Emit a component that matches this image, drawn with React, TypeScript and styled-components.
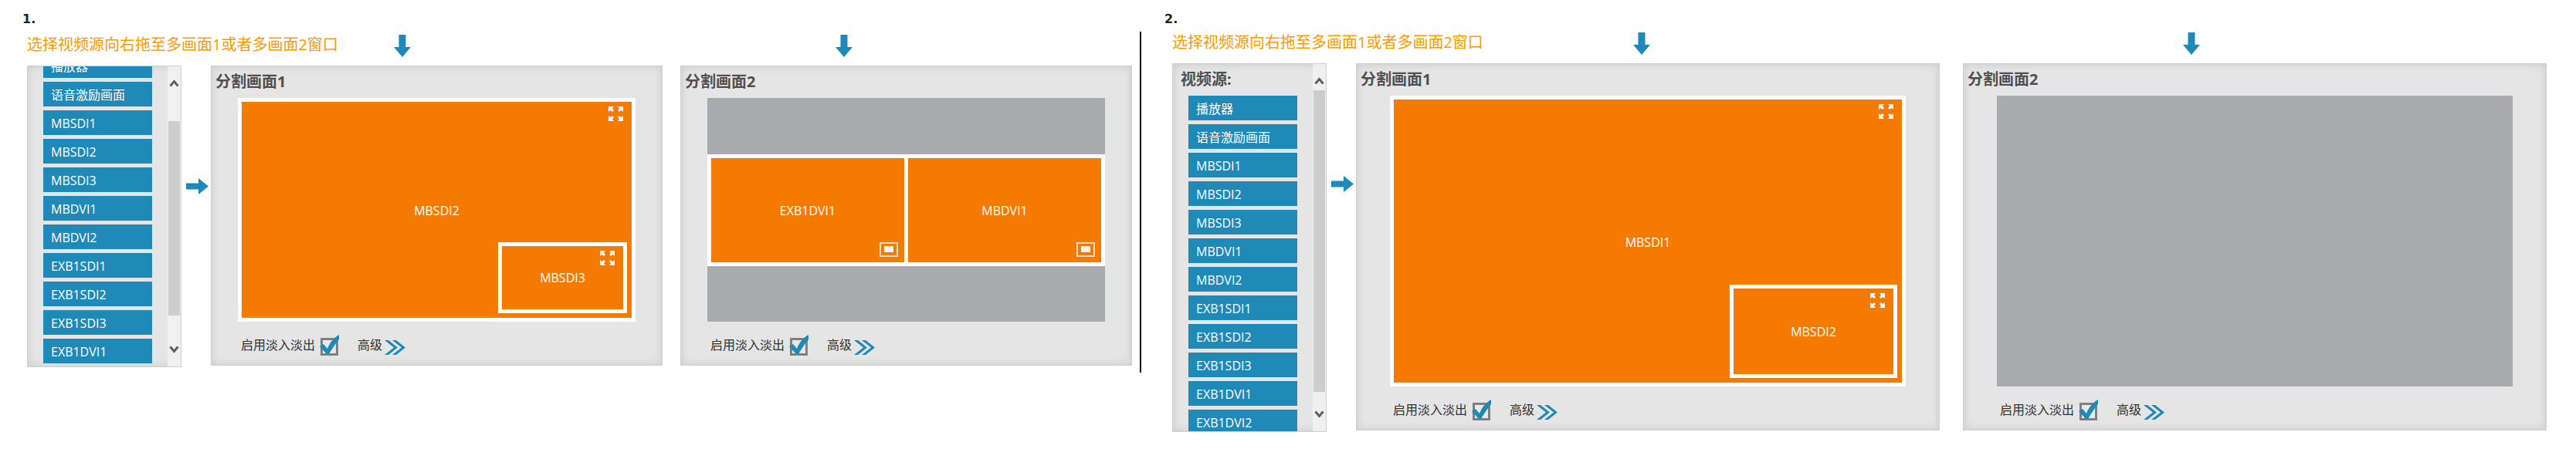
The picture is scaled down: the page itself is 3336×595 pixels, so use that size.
import React, { useLayoutEffect, useRef } from "react";
import styled, { createGlobalStyle } from "styled-components";

const GlobalStyle = createGlobalStyle`
  * { box-sizing: border-box; }
  body {
    margin: 0;
    background: #fff;
    color: #333;
    font-family: "Open Sans", "Noto Sans CJK SC", sans-serif;
    font-size: 16px;
    line-height: 24px;
  }
  button { font: inherit; color: inherit; border: 0; padding: 0; background: none; cursor: pointer; }
  h2, h3, p, ul { margin: 0; padding: 0; }
  ul { list-style: none; }
  svg { display: block; }
`;

const BLUE = "#1f89b7";
const ORANGE = "#f57b00";

const Page = styled.main`
  display: flex;
  align-items: flex-start;
  padding: 12px 38px 24px 29px;
`;

const Divider = styled.hr`
  flex: none;
  width: 2px;
  height: 442px;
  margin: 29px 30px 0 10px;
  border: 0;
  background: #111;
`;

const Step = styled.section<{ $share: number; $indent: number }>`
  flex: ${(p) => p.$share} 1 0;
  min-width: 0;
  padding-left: ${(p) => p.$indent}px;
`;

const StepNumber = styled.h2<{ $indent: number }>`
  margin-left: -${(p) => p.$indent}px;
  height: 28px;
  font-family: "DejaVu Sans", sans-serif;
  font-size: 16px;
  line-height: 26px;
  font-weight: 700;
  color: #222;
`;

const Heading = styled.div<{ $height: number }>`
  display: flex;
  align-items: flex-end;
  height: ${(p) => p.$height}px;
  padding-bottom: 11px;
`;

const Hint = styled.p`
  flex: 0 0 238px;
  min-width: 0;
  font-size: 20px;
  line-height: 32px;
  color: #ff9900;
  white-space: nowrap;
`;

const Columns = styled.div<{ $gap: number }>`
  flex: 1;
  min-width: 0;
  display: flex;
  align-items: flex-start;
  gap: ${(p) => p.$gap}px;
`;

const ArrowSlot = styled.div<{ $indent: number }>`
  flex: 1 1 0;
  min-width: 0;
  svg { margin-left: ${(p) => p.$indent}px; }
`;

const Body = styled.div`
  display: flex;
  align-items: flex-start;
`;

const Box = styled.section`
  border: 1px solid #d0d0d0;
  background: #e5e5e5;
  box-shadow: inset 0 0 12px rgba(0, 0, 0, 0.12);
`;

const SourceBox = styled(Box)<{ $height: number }>`
  flex: 0 0 200px;
  display: flex;
  height: ${(p) => p.$height}px;
`;

const Scroller = styled.div`
  flex: 1;
  overflow: hidden;
  padding: 5px 20px;
`;

const BoxTitle = styled.h3`
  font-size: 20px;
  line-height: 30px;
  font-weight: 700;
  color: #505050;
`;

const SourceTitle = styled(BoxTitle)`
  margin: 0 0 6px -10px;
`;

const Sources = styled.ul`
  display: grid;
  gap: 5px;
`;

const Source = styled.button`
  display: block;
  width: 100%;
  height: 32px;
  padding: 2px 0 0 10px;
  background: ${BLUE};
  color: #fff;
  line-height: 30px;
  text-align: left;
`;

const ScrollBar = styled.div`
  flex: 0 0 17px;
  display: flex;
  flex-direction: column;
  background: #f0f0f0;
`;

const ScrollButton = styled.button<{ $up?: boolean }>`
  display: flex;
  align-items: center;
  justify-content: center;
  height: 34px;
  padding: ${(p) => (p.$up ? "10px 0 0" : "0 0 10px")};
`;

const Track = styled.div`
  flex: 1;
`;

const Thumb = styled.div<{ $top: number; $height: number }>`
  height: ${(p) => p.$height}px;
  margin: ${(p) => p.$top}px 1px 0;
  background: #cdcdcd;
`;

const FlowArrow = styled.div<{ $top: number }>`
  flex: 0 0 38px;
  padding: ${(p) => p.$top}px 0 0 6px;
`;

const ScreenBox = styled(Box)<{ $side: number }>`
  flex: 1 1 0;
  min-width: 0;
  padding: 5px ${(p) => p.$side}px 9px;
`;

const ScreenTitle = styled(BoxTitle)<{ $side: number }>`
  margin: 0 0 6px ${(p) => 5 - p.$side}px;
`;

const Stage = styled.div<{ $ratio: string }>`
  display: flex;
  flex-direction: column;
  justify-content: center;
  aspect-ratio: ${(p) => p.$ratio};
  background: #a9aaad;
`;

const Tile = styled.div`
  position: relative;
  flex: 1;
  display: flex;
  align-items: center;
  justify-content: center;
  padding-top: 2px;
  background: ${ORANGE};
  color: #fff;
`;

const FullTile = styled(Tile)`
  border: 5px solid #fff;
`;

const TileRow = styled.div`
  display: flex;
  gap: 5px;
  height: 50%;
  padding: 5px;
  background: #fff;
`;

const Inset = styled.div<{ $width: number; $height: number }>`
  position: absolute;
  right: 6px;
  bottom: 6px;
  width: ${(p) => p.$width}px;
  height: ${(p) => p.$height}px;
  display: flex;
  align-items: center;
  justify-content: center;
  border: 5px solid #fff;
  background: ${ORANGE};
`;

const ExpandButton = styled.button`
  position: absolute;
  top: 6px;
  right: 11px;
`;

const LayoutButton = styled.button`
  position: absolute;
  right: 8px;
  bottom: 7px;
`;

const Footer = styled.div`
  display: flex;
  align-items: flex-start;
  height: 26px;
  margin-top: 21px;
  padding-left: 4px;
  line-height: 18px;
`;

const FadeLabel = styled.label`
  display: flex;
  align-items: flex-start;
  gap: 7px;
`;

const CheckWrap = styled.span`
  position: relative;
  width: 23px;
  height: 23px;
`;

const Check = styled.input`
  appearance: none;
  display: block;
  width: 23px;
  height: 23px;
  margin: 0;
  border: 3px solid #808080;
  background: #e9e9e9;
  &:not(:checked) + svg { display: none; }
`;

const Tick = styled.svg`
  position: absolute;
  left: -1px;
  top: -4px;
  pointer-events: none;
`;

const Advanced = styled.button`
  display: flex;
  align-items: flex-start;
  gap: 3px;
  margin-left: 25px;
  svg { margin-top: 3px; }
`;

const DownArrow = () => (
  <svg width="22" height="29" viewBox="0 0 22 29" fill={BLUE} aria-hidden="true">
    <path d="M6.500 0h9v16H22L11 29 0 16h6.500z" />
  </svg>
);

const RightArrow = () => (
  <svg width="29" height="21" viewBox="0 0 29 21" fill={BLUE} aria-hidden="true">
    <path d="M0 6.500h16V0L29 10.500 16 21v-6.500H0z" />
  </svg>
);

const ScrollChevron = ({ up }: { up?: boolean }) => (
  <svg width="13" height="10" viewBox="0 0 13 10" fill="none" stroke="#606060" strokeWidth="3" aria-hidden="true">
    <path d={up ? "M1.500 8.500 6.500 2.500 11.500 8.500" : "M1.500 1.500 6.500 7.500 11.500 1.500"} />
  </svg>
);

const ExpandIcon = () => (
  <svg width="19" height="19" viewBox="0 0 19 19" fill="#f3f3f3" aria-hidden="true">
    <path d="M0 0h7L5 2.500 7 5 5 7 2.500 5 0 7z" />
    <path d="M19 0h-7l2 2.500L12 5l2 2 2.500-2L19 7z" />
    <path d="M0 19h7l-2-2.500L7 14l-2-2-2.500 2L0 12z" />
    <path d="M19 19h-7l2-2.500-2-2.500 2-2 2.500 2 2.500-2z" />
  </svg>
);

const LayoutIcon = () => (
  <svg width="24" height="19" viewBox="0 0 24 19" aria-hidden="true">
    <rect x="1" y="1" width="22" height="17" fill="none" stroke="#fbdcc0" strokeWidth="2" />
    <rect x="6" y="5" width="12" height="8" fill="#f3f3f3" />
  </svg>
);

const DoubleChevron = () => (
  <svg width="27" height="19" viewBox="0 0 27 19" fill={BLUE} aria-hidden="true">
    <path d="M0 0h5l12 9.500L5 19H0l12-9.500z" />
    <path d="M10 0h5l12 9.500L15 19h-5l12-9.500z" />
  </svg>
);

const SOURCES = [
  "播放器", "语音激励画面", "MBSDI1", "MBSDI2", "MBSDI3", "MBDVI1",
  "MBDVI2", "EXB1SDI1", "EXB1SDI2", "EXB1SDI3", "EXB1DVI1", "EXB1DVI2",
];

type SourceListProps = {
  title?: string;
  sources: string[];
  height: number;
  scroll: number;
  thumbTop: number;
  thumbHeight: number;
};

function SourceList({ title, sources, height, scroll, thumbTop, thumbHeight }: SourceListProps) {
  const ref = useRef<HTMLDivElement>(null);
  useLayoutEffect(() => {
    if (ref.current) ref.current.scrollTop = scroll;
  }, [scroll]);
  return (
    <SourceBox $height={height}>
      <Scroller ref={ref}>
        {title && <SourceTitle>{title}</SourceTitle>}
        <Sources>
          {sources.map((name) => (
            <li key={name}>
              <Source type="button" draggable>{name}</Source>
            </li>
          ))}
        </Sources>
      </Scroller>
      <ScrollBar>
        <ScrollButton type="button" $up aria-label="向上滚动"><ScrollChevron up /></ScrollButton>
        <Track><Thumb $top={thumbTop} $height={thumbHeight} /></Track>
        <ScrollButton type="button" aria-label="向下滚动"><ScrollChevron /></ScrollButton>
      </ScrollBar>
    </SourceBox>
  );
}

type ScreenProps = {
  title: string;
  side: number;
  ratio: string;
  children?: React.ReactNode;
};

function Screen({ title, side, ratio, children }: ScreenProps) {
  return (
    <ScreenBox $side={side}>
      <ScreenTitle $side={side}>{title}</ScreenTitle>
      <Stage $ratio={ratio}>{children}</Stage>
      <Footer>
        <FadeLabel>
          启用淡入淡出
          <CheckWrap>
            <Check type="checkbox" defaultChecked />
            <Tick width="26" height="26" viewBox="0 0 26 26" fill={BLUE} aria-hidden="true">
              <path d="M0 15l5-3 5 6C13 10 18 4 25 0v6C20 12 16 18 12 25H9z" />
            </Tick>
          </CheckWrap>
        </FadeLabel>
        <Advanced type="button">高级<DoubleChevron /></Advanced>
      </Footer>
    </ScreenBox>
  );
}

type PipProps = { main: string; inset: string; width: number; height: number };

const PictureInPicture = ({ main, inset, width, height }: PipProps) => (
  <FullTile>
    {main}
    <ExpandButton type="button" aria-label="全屏"><ExpandIcon /></ExpandButton>
    <Inset $width={width} $height={height}>
      {inset}
      <ExpandButton type="button" aria-label="全屏"><ExpandIcon /></ExpandButton>
    </Inset>
  </FullTile>
);

const SplitTile = ({ name }: { name: string }) => (
  <Tile>
    {name}
    <LayoutButton type="button" aria-label="画中画"><LayoutIcon /></LayoutButton>
  </Tile>
);

const HINT = "选择视频源向右拖至多画面1或者多画面2窗口";

export default function App() {
  return (
    <>
      <GlobalStyle />
      <Page>
        <Step $share={1431} $indent={6}>
          <StepNumber $indent={6}>1.</StepNumber>
          <Heading $height={45}>
            <Hint>{HINT}</Hint>
            <Columns $gap={23}>
              <ArrowSlot $indent={237}><DownArrow /></ArrowSlot>
              <ArrowSlot $indent={201}><DownArrow /></ArrowSlot>
            </Columns>
          </Heading>
          <Body>
            <SourceList sources={SOURCES.slice(0, 11)} height={391} scroll={22} thumbTop={37} thumbHeight={252} />
            <FlowArrow $top={146}><RightArrow /></FlowArrow>
            <Columns $gap={23}>
              <Screen title="分割画面1" side={34} ratio="515 / 290">
                <PictureInPicture main="MBSDI2" inset="MBSDI3" width={167} height={92} />
              </Screen>
              <Screen title="分割画面2" side={34} ratio="515 / 290">
                <TileRow>
                  <SplitTile name="EXB1DVI1" />
                  <SplitTile name="MBDVI1" />
                </TileRow>
              </Screen>
            </Columns>
          </Body>
        </Step>
        <Divider />
        <Step $share={1780} $indent={10}>
          <StepNumber $indent={10}>2.</StepNumber>
          <Heading $height={42}>
            <Hint>{HINT}</Hint>
            <Columns $gap={30}>
              <ArrowSlot $indent={359}><DownArrow /></ArrowSlot>
              <ArrowSlot $indent={285}><DownArrow /></ArrowSlot>
            </Columns>
          </Heading>
          <Body>
            <SourceList title="视频源:" sources={SOURCES} height={478} scroll={0} thumbTop={0} thumbHeight={391} />
            <FlowArrow $top={146}><RightArrow /></FlowArrow>
            <Columns $gap={30}>
              <Screen title="分割画面1" side={43} ratio="668 / 377">
                <PictureInPicture main="MBSDI1" inset="MBSDI2" width={217} height={121} />
              </Screen>
              <Screen title="分割画面2" side={43} ratio="668 / 377" />
            </Columns>
          </Body>
        </Step>
      </Page>
    </>
  );
}
